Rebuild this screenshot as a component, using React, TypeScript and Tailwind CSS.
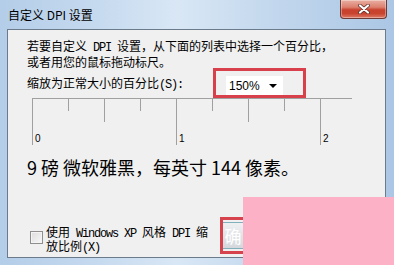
import React from "react";

const latin = "whitespace-pre font-['Liberation_Mono',monospace] text-[12px] tracking-[-1.2px]";

function CloseButton() {
    return (
        <div className="flex h-[19px] w-[47px] items-center justify-center rounded-b-[4px] border border-t-0 border-[#6e3a36] bg-[linear-gradient(180deg,#e9b0a2_0%,#dc806f_40%,#c7412d_55%,#c9442f_75%,#dd7a66_100%)] shadow-[inset_0_0_0_1px_rgba(255,255,255,0.35)]">
            <svg width="12" height="10" viewBox="0 0 12 10">
                <path d="M2 1.5 L10 8.5 M10 1.5 L2 8.5" stroke="#5a2a24" strokeWidth="3.6" strokeLinecap="round" />
                <path d="M2 1.5 L10 8.5 M10 1.5 L2 8.5" stroke="#ffffff" strokeWidth="2.2" strokeLinecap="round" />
            </svg>
        </div>
    );
}

function Ruler() {
    const ticks = [0, 36, 72, 108, 144, 180, 216, 252, 288];
    const length = (i: number) => (i % 4 === 0 ? 47 : i % 2 === 0 ? 24 : 13);
    return (
        <div className="ml-[24px] mt-[3px] w-[321px]">
            <svg width="321" height="48" viewBox="0 0 321 48" className="block">
                <line x1="0" y1="0.5" x2="320" y2="0.5" stroke="#a0a0a0" />
                {ticks.map((x, i) => (
                    <line key={x} x1={x + 0.5} y1="0" x2={x + 0.5} y2={length(i)} stroke="#a0a0a0" />
                ))}
            </svg>
            <div className="-mt-[12px] flex font-['Liberation_Sans',sans-serif] text-[10px] leading-[10px]">
                <span className="w-[144px] pl-[3px]">0</span>
                <span className="w-[144px] pl-[3px]">1</span>
                <span className="pl-[3px]">2</span>
            </div>
        </div>
    );
}

export default function App() {
    return (
        <div className="relative h-[265px] w-[394px] overflow-hidden bg-[linear-gradient(90deg,#b4cde8_0%,#c6daef_25%,#d9e7f5_45%,#c2d7ed_70%,#abc7e5_100%)] font-['Noto_Sans_CJK_SC',sans-serif] text-black">
            <div className="flex h-[29px] items-start justify-between pl-[8px] pr-[7px]">
                <span className="mt-[6px] text-[12px] leading-[18px]">自定义 DPI 设置</span>
                <CloseButton />
            </div>

            <div className="ml-[7px] h-[229px] w-[379px] border border-[#6b7b8c] bg-[#f0f0f0]">
                <p className="ml-[19px] mt-[9px] text-[12px] leading-[13px]">
                    若要自定义<span className={latin}>{" DPI "}</span>设置，从下面的列表中选择一个百分比，<br />
                    或者用您的鼠标拖动标尺。
                </p>

                <div className="ml-[19px] flex h-[27px] items-end">
                    <label className="w-[199px] text-[12px] leading-[19px]">
                        缩放为正常大小的百分比<span className={latin}>(S):</span>
                    </label>
                    <div className="relative">
                        <div className="absolute -left-[13px] -top-[8px] h-[30px] w-[93px] border-[3px] border-[#d8414c]" />
                        <div className="relative flex h-[19px] w-[57px] items-center justify-between bg-white pl-[3px] pr-[6px] font-['Liberation_Sans',sans-serif] text-[12px]">
                            <span>150%</span>
                            <svg width="8" height="4" viewBox="0 0 8 4">
                                <path d="M0 0 H8 L4 4 Z" fill="#000" />
                            </svg>
                        </div>
                    </div>
                </div>

                <Ruler />

                <p className="ml-[19px] mt-[11px] text-[18px] leading-[24px]">9 磅 微软雅黑，每英寸 144 像素。</p>

                <div className="ml-[22px] mt-[47px] flex items-start gap-[3px]">
                    <span className="mt-[5px] h-[13px] w-[13px] border border-[#8f8f8f] bg-[linear-gradient(135deg,#dcdcdc,#f8f8f8)] shadow-[inset_0_0_0_1px_#f4f4f4]" />
                    <span className="text-[12px] leading-[12px]">
                        使用<span className={latin}>{" Windows XP "}</span>风格<span className={latin}>{" DPI "}</span>缩<br />
                        放比例<span className={latin}>(X)</span>
                    </span>
                </div>
            </div>

            <div className="absolute left-[220px] top-[217px] h-[37px] w-[24px] border-[3px] border-r-0 border-[#d6434d]" />
            <div className="absolute left-[223px] top-[222px] flex h-[27px] w-[20px] items-center justify-center overflow-hidden border-y border-[#7fb0bc] bg-[linear-gradient(180deg,#eef0f2,#d4d8dc)] text-[17px] text-white">
                确
            </div>
            <div className="absolute left-[243px] top-[197px] h-[68px] w-[151px] bg-[#fdb1c6]" />
        </div>
    );
}
